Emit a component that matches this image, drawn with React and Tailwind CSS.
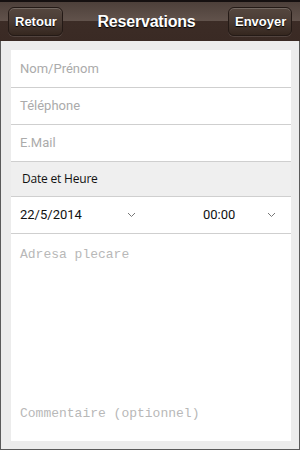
import { useState } from 'react'

const Chevron = () => (
  <svg width="9" height="6" viewBox="0 0 9 6" className="text-[#777]">
    <path d="M1 1l3.5 3.5L8 1" fill="none" stroke="currentColor" strokeWidth="1" />
  </svg>
)

const HeaderButton = ({ children, className = '' }) => (
  <button
    className={`h-[29px] rounded-[6px] border border-[#241a16] bg-gradient-to-b from-[#55473f] via-[#4a3c35] to-[#35271f] px-[6px] text-[13px] font-bold text-white [text-shadow:0_1px_1px_#000] shadow-[inset_0_1px_0_rgba(255,255,255,0.18),0_1px_0_rgba(255,255,255,0.12)] ${className}`}
  >
    {children}
  </button>
)

export default function App() {
  const [date] = useState('22/5/2014')
  const [time] = useState('00:00')

  return (
    <div className="flex h-[450px] w-[300px] flex-col font-['Roboto',sans-serif]">
      {/* Barre du haut */}
      <div className="relative flex h-[41px] shrink-0 items-center justify-between border-t-2 border-[#151010] bg-[linear-gradient(to_bottom,#4d403a_0%,#62534c_50%,#3c2c26_50%,#3a2a24_100%)] pl-[8px] pr-[8px] font-['Liberation_Sans',Arial,sans-serif]">
        <HeaderButton className="w-[55px]">Retour</HeaderButton>
        <h1 className="pl-[2px] text-[16px] font-bold tracking-[-0.2px] text-white [text-shadow:0_1px_1px_#000]">Reservations</h1>
        <HeaderButton className="w-[64px]">Envoyer</HeaderButton>
      </div>

      {/* Formulaire */}
      <div className="flex flex-1 flex-col border-x border-b border-[#5a5a5a] bg-[#ececec] pb-[8px] pl-[10px] pr-[8px] pt-[9px]">
        <div className="flex flex-1 flex-col bg-white">
          <div className="flex h-[38px] items-center border-b border-[#cfcfcf] px-[9px] text-[13px] text-[#ababab]">Nom/Prénom</div>
          <div className="flex h-[37px] items-center border-b border-[#cfcfcf] px-[9px] text-[13px] text-[#ababab]">Téléphone</div>
          <div className="flex h-[37px] items-center border-b border-[#cfcfcf] px-[9px] text-[13px] text-[#ababab]">E.Mail</div>
          <div className="flex h-[35px] items-center border-b border-[#cfcfcf] bg-[#efefef] px-[11px] font-['Open_Sans',sans-serif] text-[12px] tracking-[-0.2px] text-[#111]">
            Date et Heure
          </div>
          <div className="flex h-[37px] items-center border-b border-[#cfcfcf] pl-[9px] text-[13px] text-[#111]">
            <span className="w-[107px]">{date}</span>
            <Chevron />
            <span className="ml-[67px] w-[64px]">{time}</span>
            <Chevron />
          </div>
          <div className="flex flex-1 flex-col font-['Liberation_Mono','Courier_New',monospace] text-[13px] text-[#b8b8b8]">
            <div className="px-[9px] pt-[11px]">Adresa plecare</div>
            <div className="mt-auto px-[9px] pb-[18px]">Commentaire (optionnel)</div>
          </div>
        </div>
      </div>
    </div>
  )
}
